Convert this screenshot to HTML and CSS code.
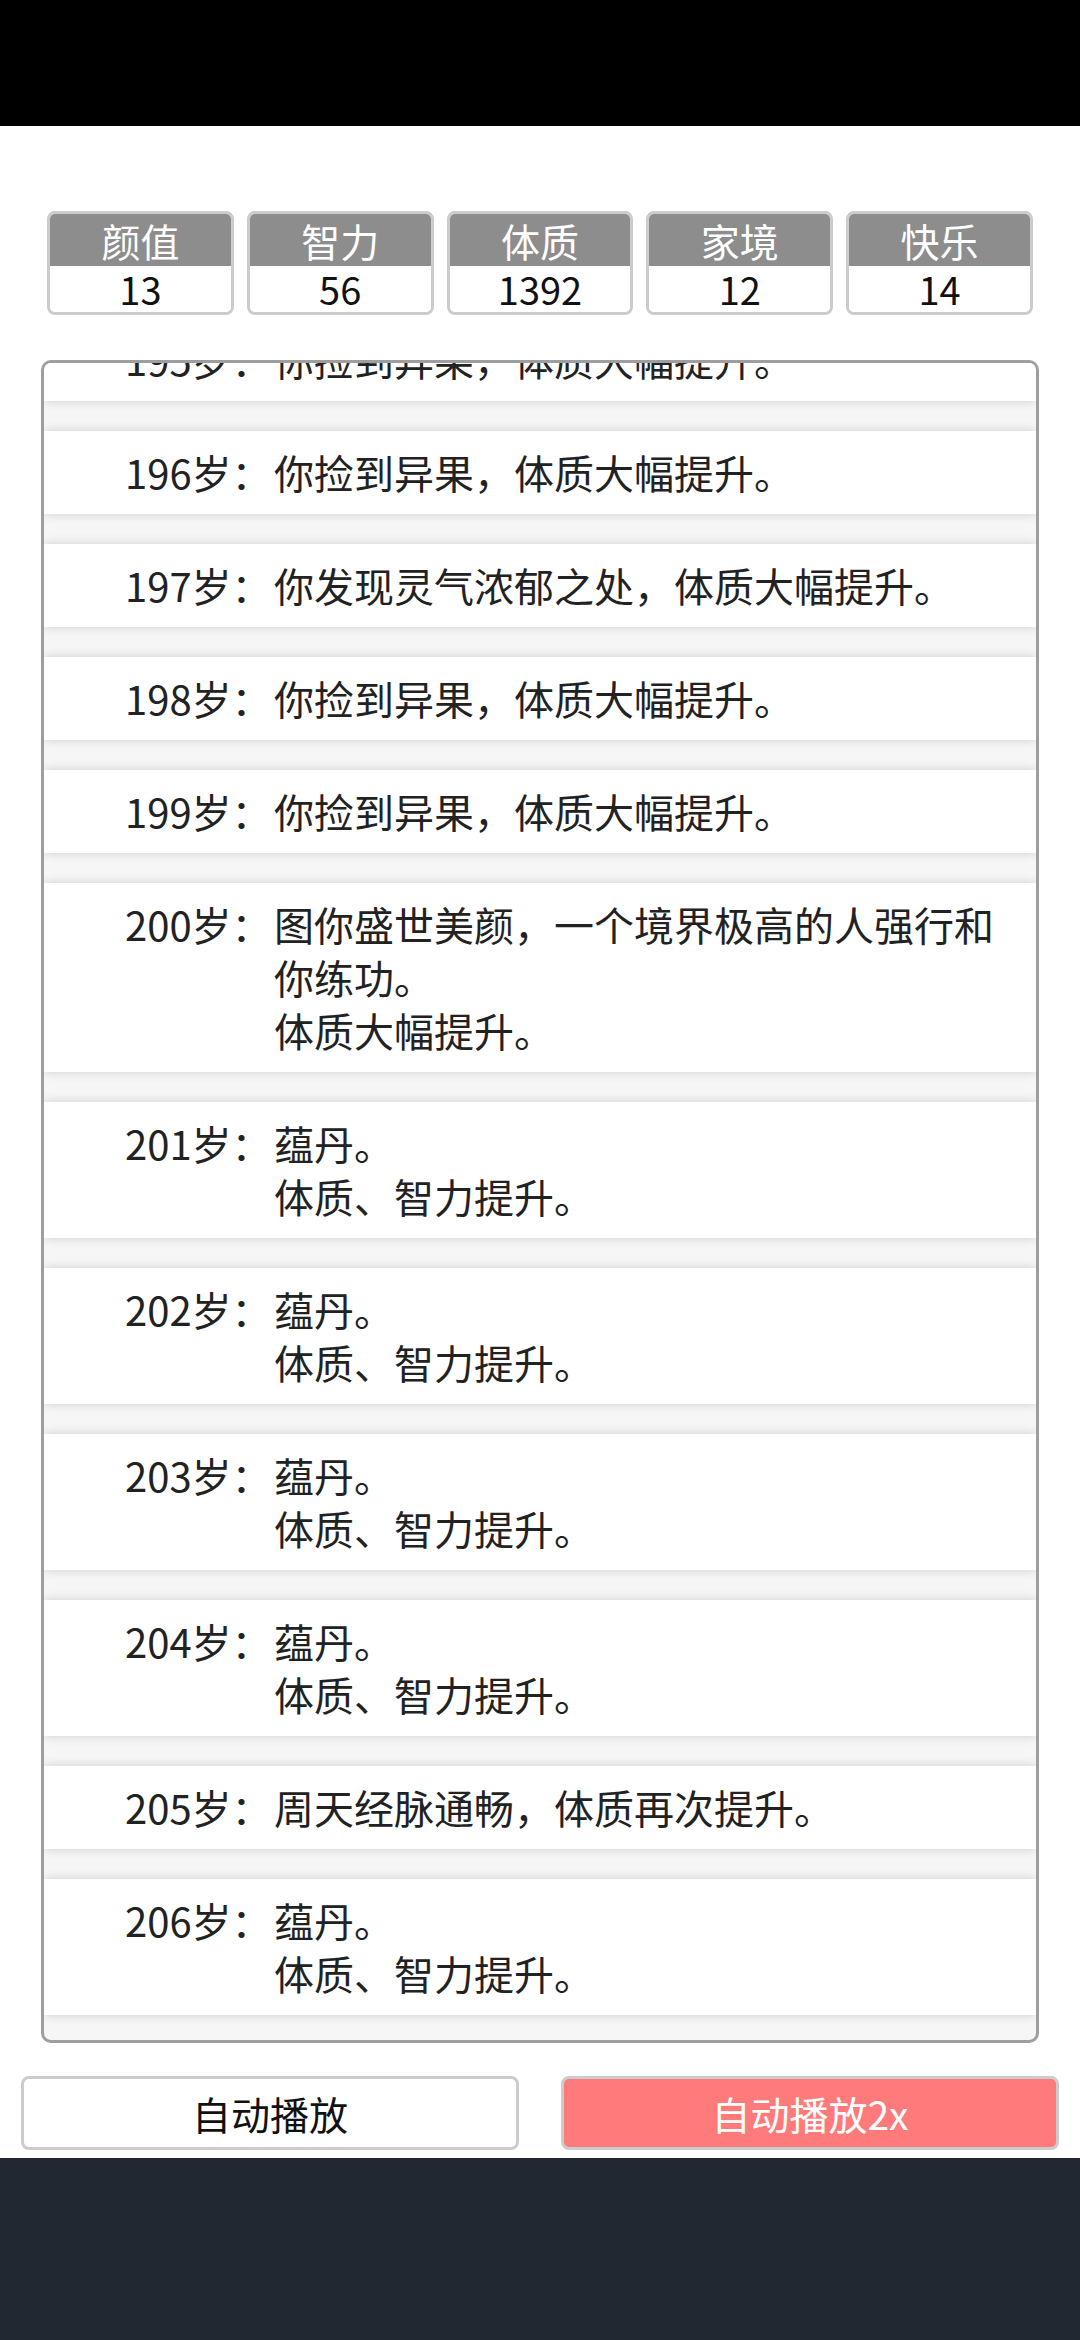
FILE: index.html
```html
<!DOCTYPE html>
<html lang="zh-CN">
<head>
    <meta charset="UTF-8">
    <meta name="viewport" content="width=device-width, initial-scale=1.0">
    <title>人生重开模拟器</title>
    <link rel="stylesheet" href="styles.css">
</head>
<body>
    <div class="status-bar"></div>

    <div class="stats">
        <div class="stat"><div class="stat-name">颜值</div><div class="stat-value">13</div></div>
        <div class="stat"><div class="stat-name">智力</div><div class="stat-value">56</div></div>
        <div class="stat"><div class="stat-name">体质</div><div class="stat-value">1392</div></div>
        <div class="stat"><div class="stat-name">家境</div><div class="stat-value">12</div></div>
        <div class="stat"><div class="stat-name">快乐</div><div class="stat-value">14</div></div>
    </div>

    <div class="log">
        <div class="entry first"><span class="age">195岁：</span><span class="text">你捡到异果，体质大幅提升。</span></div>
        <div class="entry"><span class="age">196岁：</span><span class="text">你捡到异果，体质大幅提升。</span></div>
        <div class="entry"><span class="age">197岁：</span><span class="text">你发现灵气浓郁之处，体质大幅提升。</span></div>
        <div class="entry"><span class="age">198岁：</span><span class="text">你捡到异果，体质大幅提升。</span></div>
        <div class="entry"><span class="age">199岁：</span><span class="text">你捡到异果，体质大幅提升。</span></div>
        <div class="entry"><span class="age">200岁：</span><span class="text">图你盛世美颜，一个境界极高的人强行和你练功。<br>体质大幅提升。</span></div>
        <div class="entry"><span class="age">201岁：</span><span class="text">蕴丹。<br>体质、智力提升。</span></div>
        <div class="entry"><span class="age">202岁：</span><span class="text">蕴丹。<br>体质、智力提升。</span></div>
        <div class="entry"><span class="age">203岁：</span><span class="text">蕴丹。<br>体质、智力提升。</span></div>
        <div class="entry"><span class="age">204岁：</span><span class="text">蕴丹。<br>体质、智力提升。</span></div>
        <div class="entry"><span class="age">205岁：</span><span class="text">周天经脉通畅，体质再次提升。</span></div>
        <div class="entry"><span class="age">206岁：</span><span class="text">蕴丹。<br>体质、智力提升。</span></div>
    </div>

    <div class="controls">
        <button class="btn">自动播放</button>
        <button class="btn btn-fast">自动播放2x</button>
    </div>

    <div class="nav-bar"></div>
</body>
</html>
```

FILE: styles.css
```css
body {
    margin: 0;
    background-color: #ffffff;
    font-family: "Noto Sans CJK SC", "Noto Sans", sans-serif;
    color: #222;
}
.status-bar {
    height: 126px;
    background-color: #000;
}
.stats {
    display: flex;
    gap: 13px;
    padding: 0 47px;
    margin-top: 85px;
}
.stat {
    flex: 1;
    border: 3px solid #cccccc;
    border-radius: 8px;
    overflow: hidden;
}
.stat-name, .stat-value {
    display: flex;
    align-items: center;
    justify-content: center;
    line-height: 1;
}
.stat-name {
    height: 52px;
    font-size: 39px;
    color: #fff;
    background-color: #8d8d8d;
}
.stat-value {
    height: 46px;
    font-size: 38px;
    color: #111;
    background-color: #fff;
}
.log {
    box-sizing: border-box;
    height: 1683px;
    margin: 45px 41px 0;
    border: 3px solid #9e9e9e;
    border-radius: 10px;
    background-color: #f6f6f6;
    overflow: hidden;
}
.entry {
    display: flex;
    padding: 15px 30px 15px 81px;
    margin-bottom: 30px;
    font-size: 40px;
    line-height: 53px;
    background-color: #fff;
    box-shadow: 0 0 10px rgba(0, 0, 0, 0.16);
}
.entry.first {
    margin-top: -45px;
}
.age {
    flex-shrink: 0;
    width: 149px;
    white-space: nowrap;
}
.text {
    flex: 1;
}
.controls {
    display: flex;
    gap: 42px;
    padding: 0 21px;
    margin-top: 33px;
}
.btn {
    flex: 1;
    height: 74px;
    border: 3px solid #cccccc;
    border-radius: 8px;
    background-color: #fff;
    font-family: inherit;
    font-size: 39px;
    color: #111;
    padding: 0;
}
.btn-fast {
    background-color: #ff7b7b;
    color: #fff;
}
.nav-bar {
    height: 182px;
    margin-top: 8px;
    background-color: #222831;
}
```
